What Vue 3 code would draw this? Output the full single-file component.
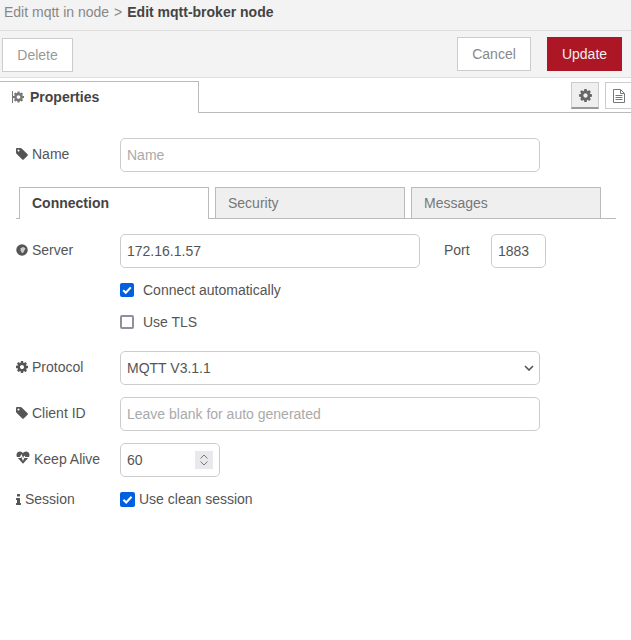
<template>
  <div class="tray">
    <div class="crumbs">
      <span class="crumb">Edit mqtt in node</span>
      <span class="crumb-sep">&gt;</span>
      <b class="crumb-current">Edit mqtt-broker node</b>
    </div>
    <div class="toolbar">
      <button type="button" class="btn btn-delete">Delete</button>
      <button type="button" class="btn btn-cancel">Cancel</button>
      <button type="button" class="btn btn-update">Update</button>
    </div>

    <div class="tray-tabs">
      <div class="tray-tab">
        <svg class="icon icon-tab" viewBox="0 0 1536 1536"><path :d="cogPath" /></svg>
        <span>Properties</span>
      </div>
      <div class="tray-actions">
        <button type="button" class="side-btn side-btn--on">
          <svg class="icon icon-side" viewBox="0 0 1536 1536"><path :d="cogPath" /></svg>
        </button>
        <button type="button" class="side-btn">
          <svg class="icon-file" viewBox="0 0 12 14">
            <path d="M.5 .500h7l4 4v9h-11z M7.500 .500v4h4 M2.500 6.500h7 M2.500 8.500h7 M2.500 10.500h7" />
          </svg>
        </button>
      </div>
    </div>

    <div class="form">
      <div class="row">
        <label class="lbl">
          <svg class="icon" viewBox="0 0 1536 1536"><path :d="tagPath" /></svg>Name
        </label>
        <input class="field field-wide" type="text" placeholder="Name" />
      </div>

      <div class="form-tabs">
        <div
          v-for="tab in tabs"
          :key="tab"
          class="form-tab"
          :class="{ 'form-tab--on': tab === 'Connection' }"
        >
          {{ tab }}
        </div>
      </div>

      <div class="row row-server">
        <label class="lbl">
          <svg class="icon" viewBox="0 0 24 24">
            <circle cx="12" cy="12" r="11.500" />
            <path class="globe-land" d="M9 8l6-2 4 3-5 9-2 0-3-5z" />
          </svg>Server
        </label>
        <input class="field field-server" type="text" value="172.16.1.57" />
        <label class="lbl-port">Port</label>
        <input class="field field-port" type="text" value="1883" />
      </div>

      <label class="check-row">
        <input type="checkbox" class="check" checked />
        <span>Connect automatically</span>
      </label>
      <label class="check-row">
        <input type="checkbox" class="check" />
        <span>Use TLS</span>
      </label>

      <div class="row row-protocol">
        <label class="lbl">
          <svg class="icon" viewBox="0 0 1536 1536"><path :d="cogPath" /></svg>Protocol
        </label>
        <select class="field field-wide field-select">
          <option>MQTT V3.1.1</option>
        </select>
      </div>

      <div class="row">
        <label class="lbl">
          <svg class="icon" viewBox="0 0 1536 1536"><path :d="tagPath" /></svg>Client ID
        </label>
        <input class="field field-wide" type="text" placeholder="Leave blank for auto generated" />
      </div>

      <div class="row">
        <label class="lbl">
          <svg class="icon icon-heart" viewBox="0 1.500 26 22" preserveAspectRatio="none">
            <path d="M13 23 2.600 12.600C-.4 9.600.3 3 6.600 2.200 9.500 2 11.800 3.400 13 5.200 14.200 3.400 16.500 2 19.400 2.200 25.700 3 26.400 9.600 23.400 12.600Z" />
            <path class="pulse" d="M2 12.500h6l2-3.500 3 7 2.500-5 1.500 1.500h7" />
          </svg>Keep Alive
        </label>
        <div class="num-wrap">
          <input class="field field-num" type="number" value="60" />
          <span class="num-spin">
            <svg viewBox="0 0 18 18">
              <path d="M5.500 7.500 9 4l3.500 3.500M5.500 10.500 9 14l3.500-3.500" />
            </svg>
          </span>
        </div>
      </div>

      <div class="row row-session">
        <label class="lbl lbl-session">
          <svg class="icon icon-info" viewBox="576 128 640 1408"><path :d="infoPath" /></svg>Session
        </label>
        <label class="session-check">
          <input type="checkbox" class="check check-lg" checked />
          <span>Use clean session</span>
        </label>
      </div>
    </div>
  </div>
</template>

<script setup>
const tabs = ['Connection', 'Security', 'Messages']

// font-awesome 4 glyphs
const cogPath =
  'M1024 768q0-106-75-181t-181-75-181 75-75 181 75 181 181 75 181-75 75-181zm512-109v222q0 12-8 23t-20 13l-185 28q-19 54-39 91 35 50 107 138 10 12 10 25t-9 23q-27 37-99 108t-94 71q-12 0-26-9l-138-108q-44 23-91 38-16 136-29 186-7 28-36 28h-222q-14 0-24.500-8.500t-11.500-21.500l-28-184q-49-16-90-37l-141 107q-10 9-25 9-14 0-25-11-126-114-165-168-7-10-7-23 0-12 8-23 15-21 51-66.500t54-70.500q-27-50-41-99l-183-27q-13-2-21-12.500t-8-23.500v-222q0-12 8-23t19-13l186-28q14-46 39-92-40-57-107-138-10-12-10-24 0-10 9-23 26-36 98.500-107.500t94.500-71.500q13 0 26 10l138 107q44-23 91-38 16-136 29-186 7-28 36-28h222q14 0 24.500 8.500t11.500 21.500l28 184q49 16 90 37l142-107q9-9 24-9 13 0 25 10 129 119 165 170 7 8 7 22 0 12-8 23-15 21-51 66.500t-54 70.500q26 50 41 98l183 28q13 2 21 12.500t8 23.500z'
const tagPath =
  'M448 320q0-53-37.500-90.500t-90.500-37.500-90.500 37.500-37.500 90.500 37.500 90.500 90.500 37.500 90.500-37.500 37.500-90.500zm1067 576q0 53-37 90l-491 492q-39 37-91 37-53 0-90-37l-715-716q-38-37-64.500-101t-26.500-117v-416q0-52 38-90t90-38h416q53 0 117 26.500t102 64.500l715 714q37 39 37 91z'
const infoPath =
  'M1216 1344v128q0 26-19 45t-45 19h-512q-26 0-45-19t-19-45v-128q0-26 19-45t45-19h64v-384h-64q-26 0-45-19t-19-45v-128q0-26 19-45t45-19h384q26 0 45 19t19 45v576h64q26 0 45 19t19 45zm-128-1152v192q0 26-19 45t-45 19h-256q-26 0-45-19t-19-45v-192q0-26 19-45t45-19h256q26 0 45 19t19 45z'
</script>

<style>
html,
body {
  background: #fff;
}
</style>

<style scoped>
.tray {
  width: 631px;
  height: 640px;
  overflow: hidden;
  background: #fff;
  color: #555;
  font-family: 'Liberation Sans', Arial, sans-serif;
  font-size: 14px;
}

.crumbs {
  box-sizing: border-box;
  height: 31px;
  padding: 4px 0 0 4px;
  line-height: 17px;
  background: #f3f3f3;
  border-bottom: 1px solid #ddd;
  white-space: nowrap;
}

.crumb {
  color: #888;
}

.crumb-sep {
  margin: 0 5px;
  color: #888;
}

.crumb-current {
  color: #444;
}

.toolbar {
  box-sizing: border-box;
  display: flex;
  align-items: flex-start;
  height: 47px;
  padding: 6px 9px 0 2px;
  background: #f3f3f3;
  border-bottom: 1px solid #ddd;
}

.btn {
  box-sizing: border-box;
  height: 34px;
  padding: 0;
  border: 1px solid #ccc;
  background: #fff;
  color: #888;
  font: inherit;
}

.btn-delete {
  width: 71px;
  margin-top: 1px;
  color: #999;
}

.btn-cancel {
  width: 74px;
  margin-left: auto;
}

.btn-update {
  width: 75px;
  margin-left: 16px;
  border-color: #ad1625;
  background: #ad1625;
  color: #eee;
}

.tray-tabs {
  box-sizing: border-box;
  display: flex;
  justify-content: space-between;
  height: 35px;
  padding-top: 3px;
  border-bottom: 1px solid #bbb;
}

.tray-tab {
  box-sizing: border-box;
  display: flex;
  align-items: center;
  gap: 6px;
  width: 199px;
  height: 32px;
  padding: 0 0 1px 12px;
  border: 1px solid #bbb;
  border-width: 1px 1px 0 0;
  background: #fff;
  color: #444;
  font-weight: 700;
}

.tray-actions {
  display: flex;
  gap: 6px;
  margin-right: -2px;
  padding-top: 1px;
}

.side-btn {
  box-sizing: border-box;
  display: flex;
  align-items: center;
  justify-content: center;
  width: 28px;
  height: 27px;
  padding: 0;
  border: 1px solid #ccc;
  background: #fff;
}

.side-btn--on {
  background: #efefef;
  border-bottom: 2px solid #999;
}

.icon {
  width: 12px;
  height: 12px;
  fill: #555;
  flex: none;
}

.icon-side {
  width: 13px;
  height: 13px;
  fill: #666;
}

.icon-tab {
  box-sizing: border-box;
  border-left: 1px solid #777;
  fill: #777;
}

.icon-file {
  width: 12px;
  height: 14px;
  fill: none;
  stroke: #777;
  stroke-width: 1;
}

.globe-land {
  fill: #ccc;
}

.form {
  padding: 25px 15px 0 16px;
}

.row {
  display: flex;
  align-items: center;
  height: 34px;
  margin-top: 12px;
}

.form > .row:first-child {
  margin-top: 0;
}

.lbl {
  display: flex;
  align-items: center;
  gap: 4px;
  width: 104px;
  flex: none;
  padding-bottom: 2px;
}

.lbl-session {
  padding-bottom: 0;
}

.field {
  box-sizing: border-box;
  height: 34px;
  padding: 0 6px;
  border: 1px solid #ccc;
  border-radius: 5px;
  background: #fff;
  color: #555;
  font: inherit;
  outline: none;
}

.field::placeholder {
  color: #aaa;
}

.field-wide {
  width: 420px;
}

.field-select {
  appearance: none;
  background: #fff url("data:image/svg+xml,%3Csvg xmlns='http://www.w3.org/2000/svg' width='10' height='6' viewBox='0 0 10 6'%3E%3Cpath d='M1 1l4 4 4-4' fill='none' stroke='%23555' stroke-width='1.6'/%3E%3C/svg%3E") no-repeat right 5px center;
}

.form-tabs {
  display: flex;
  gap: 6px;
  height: 32px;
  margin-top: 15px;
  padding-left: 3px;
  border-bottom: 1px solid #bbb;
  box-sizing: border-box;
}

.form-tab {
  box-sizing: border-box;
  width: 190px;
  height: 32px;
  padding: 7px 12px 0;
  border: 1px solid #bbb;
  background: #efefef;
  color: #777;
  line-height: 17px;
}

.form-tab--on {
  border-bottom: 0;
  background: #fff;
  color: #444;
  font-weight: 700;
}

.row-server {
  margin-top: 15px;
}

.field-server {
  width: 300px;
}

.lbl-port {
  width: 47px;
  margin-left: 24px;
  padding-bottom: 2px;
}

.field-port {
  width: 55px;
}

.check-row {
  display: flex;
  align-items: center;
  gap: 9px;
  height: 20px;
  margin: 12px 0 0 104px;
}

.check {
  appearance: none;
  box-sizing: border-box;
  width: 14px;
  height: 14px;
  margin: 0;
  border: 2px solid #8f8f9d;
  border-radius: 2px;
  background: #fff;
}

.check:checked {
  border: 0;
  background: #0060df url("data:image/svg+xml,%3Csvg xmlns='http://www.w3.org/2000/svg' viewBox='0 0 14 14'%3E%3Cpath d='M3.200 7.200l2.600 2.600 5-5.400' fill='none' stroke='%23fff' stroke-width='2'/%3E%3C/svg%3E") center / 100% 100% no-repeat;
}

.row-protocol {
  margin-top: 19px;
}

.num-wrap {
  position: relative;
  width: 100px;
  height: 34px;
}

.field-num {
  width: 100px;
  -moz-appearance: textfield;
}

.field-num::-webkit-inner-spin-button {
  appearance: none;
  margin: 0;
}

.num-spin {
  position: absolute;
  top: 8px;
  right: 7px;
  width: 18px;
  height: 18px;
  background: #e9e9ed;
}

.num-spin svg {
  display: block;
  width: 18px;
  height: 18px;
  fill: none;
  stroke: #777;
  stroke-width: 1;
}

.row-session {
  height: 20px;
}

.session-check {
  display: flex;
  align-items: center;
  gap: 4px;
}

.check-lg {
  width: 15px;
  height: 15px;
}

.icon-heart {
  width: 14px;
  height: 13px;
  margin-bottom: 3px;
}

.icon-heart .pulse {
  fill: none;
  stroke: #fff;
  stroke-width: 2;
}

.icon-info {
  width: 5px;
  height: 11px;
}
</style>
